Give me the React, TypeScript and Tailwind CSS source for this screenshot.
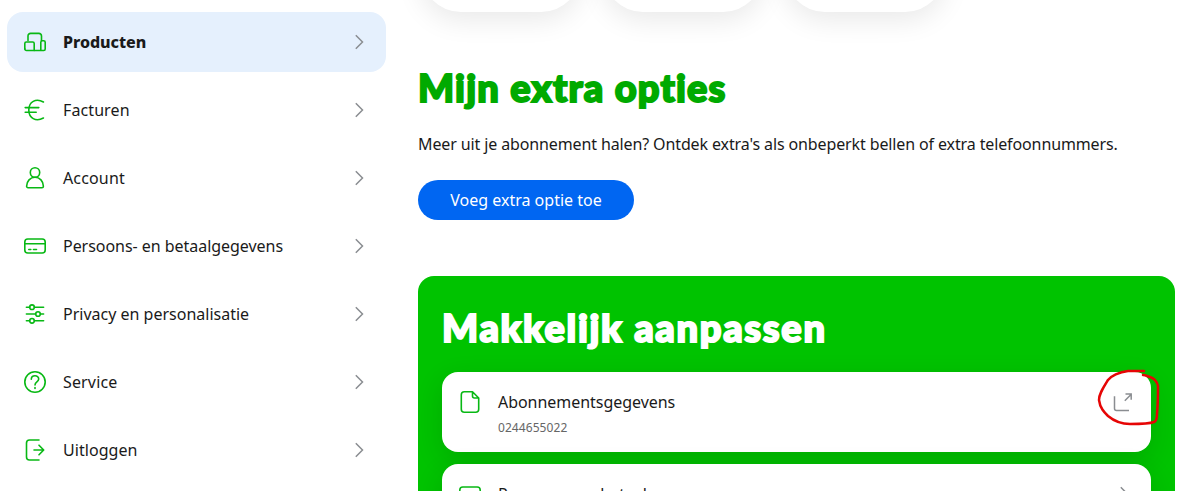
import React from "react";

const green = "#08b814";

type MenuItem = {
  label: string;
  icon: React.ReactNode;
  spacing: string;
  active?: boolean;
};

const cardIcon = (
  <>
    <rect x="1.8" y="5" width="20.4" height="14" rx="3" />
    <path d="M1.8 9.7h20.4M5.8 15.5h2M10.5 15.5h3" />
  </>
);

const menuItems: MenuItem[] = [
  {
    label: "Producten",
    active: true,
    spacing: "font-extrabold tracking-[-0.05px]",
    icon: (
      <>
        <path d="M5 10.5V6A2.6 2.6 0 0 1 7.6 3.4h8.3A2.6 2.6 0 0 1 18.5 6v4.5" />
        <path d="M1.8 18.8v-5.3A1.5 1.5 0 0 1 3.3 12h6.4a1.5 1.5 0 0 1 1.5 1.5v7" />
        <path d="M1.8 18.8a1.7 1.7 0 0 0 1.7 1.7h17.2a1.5 1.5 0 0 0 1.5-1.5v-6.7a1.5 1.5 0 0 0-1.5-1.5h-1.4a1.5 1.5 0 0 0-1.5 1.5v8.2" />
      </>
    ),
  },
  {
    label: "Facturen",
    spacing: "tracking-[0.1px]",
    icon: <path d="M20.4 4C12.8-.2 5.8 4 5.8 12s7 12.2 14.6 8M2.2 9.6h13.6M2.2 14.3h11" />,
  },
  {
    label: "Account",
    spacing: "tracking-[0.15px]",
    icon: (
      <>
        <circle cx="12" cy="6.5" r="4.7" />
        <path d="M5 21.7h14a1.4 1.4 0 0 0 1.4-1.4c0-5.2-3.7-9-8.4-9s-8.4 3.8-8.4 9A1.4 1.4 0 0 0 5 21.7z" />
      </>
    ),
  },
  { label: "Persoons- en betaalgegevens", spacing: "tracking-[-0.04px]", icon: cardIcon },
  {
    label: "Privacy en personalisatie",
    spacing: "",
    icon: (
      <>
        <path d="M3.4 5.2h3.2M11.4 5.2h9.2M3.4 12h9.2M17.4 12h3.2M3.4 18.8h3.2M11.4 18.8h9.2" />
        <circle cx="9" cy="5.2" r="2.3" />
        <circle cx="15" cy="12" r="2.3" />
        <circle cx="9" cy="18.8" r="2.3" />
      </>
    ),
  },
  {
    label: "Service",
    spacing: "tracking-[0.15px]",
    icon: (
      <>
        <circle cx="12" cy="12" r="10.2" />
        <path d="M8.3 9.2C8.3 4.7 15.7 4.7 15.7 9c0 3-3.7 2.8-3.7 6M12 17.5v1" />
      </>
    ),
  },
  {
    label: "Uitloggen",
    spacing: "tracking-[0.05px]",
    icon: <path d="M16 2H6.5a3 3 0 0 0-3 3v14a3 3 0 0 0 3 3H16M11 12h9.5M16 7.2l4.7 4.8-4.7 4.8" />,
  },
];

function Icon({ children }: { children: React.ReactNode }) {
  return (
    <svg
      className="h-6 w-6 shrink-0"
      viewBox="0 0 24 24"
      fill="none"
      stroke={green}
      strokeWidth="1.6"
      strokeLinecap="round"
      strokeLinejoin="round"
    >
      {children}
    </svg>
  );
}

function Chevron() {
  return (
    <svg className="h-6 w-6 shrink-0" viewBox="0 0 24 24" fill="none" stroke="#8a8d91" strokeWidth="1.5">
      <path d="M9.8 5.3l6.7 6.7-6.7 6.7" />
    </svg>
  );
}

function Sidebar() {
  return (
    <nav className="mt-3 ml-[7px] flex w-[379px] shrink-0 flex-col gap-2">
      {menuItems.map((item) => (
        <a
          key={item.label}
          className={`flex h-[60px] items-center rounded-2xl px-4 ${item.active ? "bg-[#e5f0fd]" : ""}`}
        >
          <Icon>{item.icon}</Icon>
          <span className={`ml-4 flex-1 whitespace-nowrap ${item.spacing}`}>{item.label}</span>
          <Chevron />
        </a>
      ))}
    </nav>
  );
}

function App() {
  return (
    <div className="relative flex h-[491px] w-[1195px] overflow-hidden bg-white font-['Noto_Sans',sans-serif] text-base text-[#1a1a1a]">
      <Sidebar />

      <main className="ml-8 w-[757px] shrink-0">
        {/* Bottom edges of the product tiles */}
        <div className="flex h-3 items-end gap-[22px] pl-[3px]">
          <div className="h-24 w-40 rounded-[40px] bg-white shadow-[0_8px_28px_rgba(0,0,0,0.09)]" />
          <div className="h-24 w-40 rounded-[40px] bg-white shadow-[0_8px_28px_rgba(0,0,0,0.09)]" />
          <div className="h-24 w-40 rounded-[40px] bg-white shadow-[0_8px_28px_rgba(0,0,0,0.09)]" />
        </div>

        <h1 className="mt-[51px] mb-[21px] font-['Lato',sans-serif] text-[38px] leading-[48px] font-black tracking-[1.2px] whitespace-nowrap text-[#00aa00] [-webkit-text-stroke:2px_#00aa00]">
          Mijn extra opties
        </h1>
        <p className="leading-6 tracking-[-0.12px] whitespace-nowrap">
          Meer uit je abonnement halen? Ontdek extra's als onbeperkt bellen of extra telefoonnummers.
        </p>
        <button className="mt-6 flex h-10 w-[216px] items-center justify-center rounded-full bg-[#0066f2] text-white">
          Voeg extra optie toe
        </button>

        {/* Quick settings */}
        <section className="mt-14 h-[300px] rounded-t-2xl bg-[#00c300] px-6 pt-[27px]">
          <h2 className="font-['Lato',sans-serif] text-[38px] leading-[48px] font-black tracking-[1.7px] whitespace-nowrap text-white [-webkit-text-stroke:2px_white]">
            Makkelijk aanpassen
          </h2>
          <a className="mt-[21px] flex h-20 rounded-2xl bg-white px-4 pt-[18px] shadow-[0_8px_28px_rgba(0,0,0,0.12)]">
            <Icon>
              <path d="M14.5 1.8H6.3a3 3 0 0 0-3 3v14.4a3 3 0 0 0 3 3h11.4a3 3 0 0 0 3-3V8zM14.5 1.8V6a2 2 0 0 0 2 2h4.2" />
            </Icon>
            <div className="ml-4 flex-1">
              <div className="leading-6 tracking-[-0.04px]">Abonnementsgegevens</div>
              <div className="mt-1 text-xs leading-5 tracking-[0.07px] text-[#666]">0244655022</div>
            </div>
            <svg className="h-6 w-6" viewBox="0 0 24 24" fill="none" stroke="#8a8d91" strokeWidth="1.5">
              <path d="M3.5 6.2v12.3a2 2 0 0 0 2 2H18M13.8 10.7l6.2-6.2M14.5 4h5.7v5.7" />
            </svg>
          </a>
          <a className="mt-3 flex h-20 rounded-2xl bg-white px-4 pt-[18px] shadow-[0_8px_28px_rgba(0,0,0,0.12)]">
            <Icon>{cardIcon}</Icon>
            <span className="ml-4 flex-1 leading-6">Persoons- en betaalgegevens</span>
            <Chevron />
          </a>
        </section>
      </main>

      {/* Hand-drawn marker round the external link */}
      <svg
        className="absolute top-[365px] left-[1093px] h-[65px] w-[72px]"
        viewBox="1093 365 72 65"
        fill="none"
        stroke="#e60505"
        strokeWidth="2.5"
        strokeLinecap="round"
      >
        <path d="M1144 371h-16c-9 1-17 5-20 9-5 8-9 14-9 20 1 8 5 12 9 16 6 5 14 8 22 8 10 0 19 0 24-2 3-1 3-5 3-8 1-10 1-20 1-28-1-5-5-8-8-9-3-1-5-2-7-2" />
      </svg>
    </div>
  );
}

export default App;
